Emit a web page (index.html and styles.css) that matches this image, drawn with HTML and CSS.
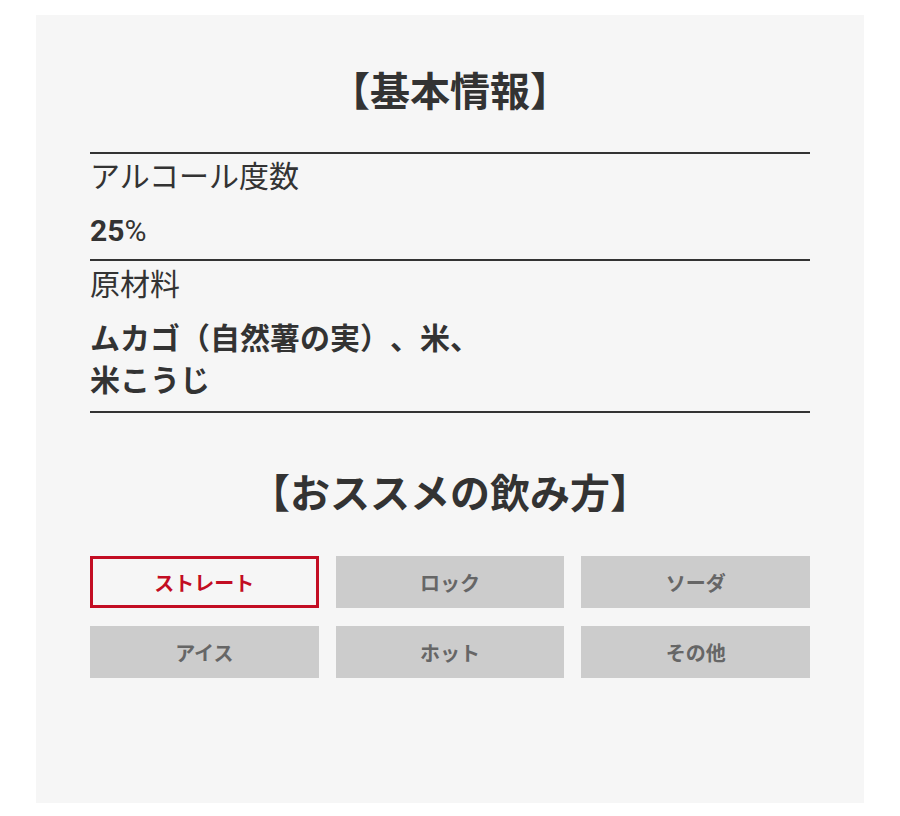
FILE: index.html
```html
<!DOCTYPE html>
<html lang="ja">
<head>
<meta charset="utf-8">
<title>基本情報</title>
<link rel="stylesheet" href="styles.css">
</head>
<body>
<main class="panel">
  <h2 class="title">【基本情報】</h2>
  <dl class="spec">
    <div class="spec-item">
      <dt>アルコール度数</dt>
      <dd><b>25</b>%</dd>
    </div>
    <div class="spec-item">
      <dt>原材料</dt>
      <dd><b>ムカゴ（自然薯の実）、米、<br>米こうじ</b></dd>
    </div>
  </dl>
  <h2 class="title title-second">【おススメの飲み方】</h2>
  <ul class="ways">
    <li class="way active">ストレート</li>
    <li class="way">ロック</li>
    <li class="way">ソーダ</li>
    <li class="way">アイス</li>
    <li class="way">ホット</li>
    <li class="way">その他</li>
  </ul>
</main>
</body>
</html>
```
FILE: styles.css
```css
html, body {
  margin: 0;
  padding: 0;
  background: #ffffff;
}
body {
  font-family: Roboto, "Noto Sans CJK JP", sans-serif;
  color: #333333;
  text-spacing-trim: space-all;
}
.panel {
  box-sizing: border-box;
  margin: 15px 36px 0;
  height: 788px;
  padding: 51px 54px 0;
  background: #f6f6f6;
}
.title {
  margin: 0;
  font-size: 40px;
  line-height: 54px;
  font-weight: 700;
  text-align: center;
  color: #333333;
}
.title-second {
  margin-top: 55px;
}
.spec {
  margin: 32px 0 0;
  border-bottom: 2px solid #333333;
}
.spec-item {
  border-top: 2px solid #333333;
  padding: 2px 0 7px;
}
.spec-item:last-child {
  padding-top: 3px;
  padding-bottom: 9px;
}
.spec dt {
  font-size: 30px;
  line-height: 41px;
  font-weight: 400;
}
.spec dd {
  margin: 13px 0 0;
  font-size: 30px;
  line-height: 42px;
  font-weight: 400;
}
.spec dd b {
  font-weight: 700;
}
.ways {
  list-style: none;
  margin: 34px 0 0;
  padding: 0;
  display: grid;
  grid-template-columns: repeat(3, 1fr);
  column-gap: 17px;
  row-gap: 18px;
}
.way {
  box-sizing: border-box;
  height: 52px;
  display: flex;
  align-items: center;
  justify-content: center;
  background: #cccccc;
  color: #666666;
  font-size: 20px;
  font-weight: 700;
}
.way.active {
  background: #f6f6f6;
  border: 3px solid #c30d23;
  color: #c30d23;
}
```
